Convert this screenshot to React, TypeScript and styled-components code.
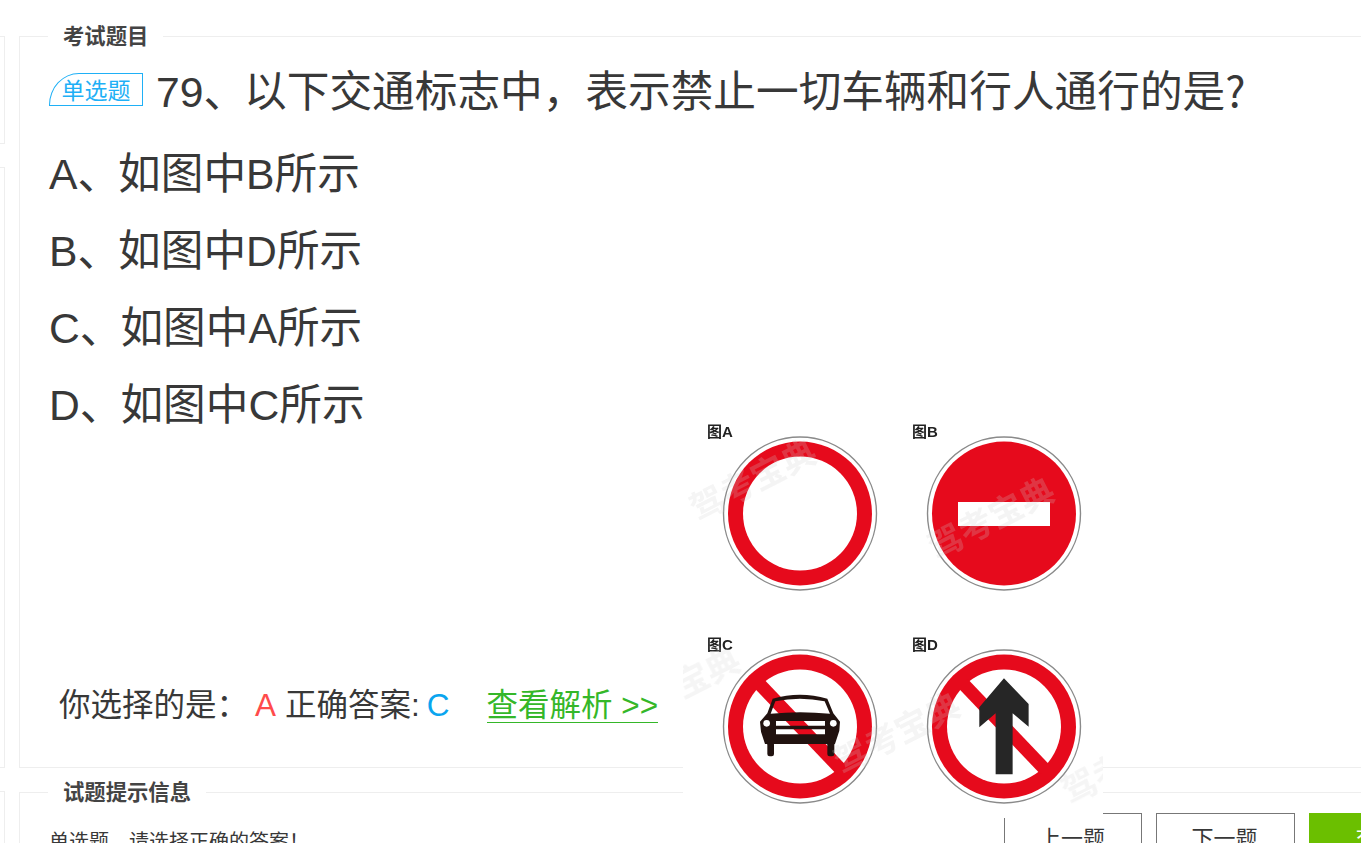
import React from 'react';
import styled, { createGlobalStyle } from 'styled-components';

const GlobalStyle = createGlobalStyle`
  html, body {
    margin: 0;
    height: 843px;
    overflow: hidden;
    background: #fff;
  }
  body {
    font-family: "Liberation Sans", "Noto Sans CJK SC", sans-serif;
    color: #383838;
  }
`;

const Page = styled.div`
  position: relative;
  display: flex;
  width: 1361px;
  height: 843px;
  overflow: hidden;
`;

const SideColumn = styled.div`
  flex: none;
  width: 5px;
  padding-top: 36px;
  display: flex;
  flex-direction: column;
  gap: 23px;
`;

const SideBox = styled.div<{ $height: number }>`
  flex: none;
  height: ${({ $height }) => $height}px;
  border: 1px solid #eee;
  border-left: 0;
`;

const MainColumn = styled.div`
  flex: none;
  width: 1400px;
  margin-left: 14px;
  padding-top: 23px;
`;

const Panel = styled.fieldset<{ $height: number }>`
  box-sizing: border-box;
  height: ${({ $height }) => $height}px;
  margin: 0 0 11px;
  padding: 0 29px;
  border: 1px solid #eee;
  min-width: 0;
`;

const PanelTitle = styled.legend`
  margin-left: -1px;
  padding: 2px 15px 0;
  font-size: 21.33px;
  line-height: 24px;
  font-weight: 700;
  color: #444;
`;

const QuestionRow = styled.div`
  display: flex;
  align-items: center;
  height: 56px;
  margin-top: 13px;
  font-size: 42.67px;
  line-height: 56px;
  white-space: nowrap;
`;

const TypeBadge = styled.span`
  box-sizing: border-box;
  flex: none;
  width: 94px;
  height: 33px;
  margin: -1px 13px 0 0;
  border: 1px solid #1fb0f6;
  border-top-left-radius: 30px 32px;
  color: #1fb0f6;
  font-size: 23px;
  line-height: 35px;
  text-align: center;
`;

const Pause = styled.span`
  margin-right: -2px;
`;

const QuestionMark = styled.span`
  font-family: "Noto Sans CJK SC", sans-serif;
`;

const OptionList = styled.div`
  margin-top: 18px;
`;

const Option = styled.div`
  height: 77px;
  font-size: 42.67px;
  line-height: 77px;
  white-space: nowrap;
`;

const ResultRow = styled.div`
  display: flex;
  align-items: baseline;
  margin-top: 241px;
  padding-left: 10px;
  font-size: 31.5px;
  line-height: 40px;
  white-space: nowrap;
`;

const Answer = styled.span<{ $color: string; $left: number; $right: number }>`
  color: ${({ $color }) => $color};
  margin: 0 ${({ $right }) => $right}px 0 ${({ $left }) => $left}px;
`;

const AnalysisLink = styled.a`
  color: #35b729;
  border-bottom: 1px solid #35b729;
  line-height: 34px;
  text-decoration: none;
`;

const HintText = styled.div`
  margin-top: 23px;
  font-size: 20px;
  line-height: 28px;
  white-space: nowrap;
`;

const ButtonBar = styled.div`
  position: absolute;
  left: 1004px;
  top: 813px;
  display: flex;
  gap: 14px;
`;

const NavButton = styled.button<{ $width: number; $primary?: boolean }>`
  box-sizing: border-box;
  flex: none;
  width: ${({ $width }) => $width}px;
  height: 60px;
  padding: 0 2px 8px 0;
  border: 1px solid ${({ $primary }) => ($primary ? '#6bbf00' : '#777')};
  background: ${({ $primary }) => ($primary ? '#6bbf00' : '#fff')};
  color: ${({ $primary }) => ($primary ? '#fff' : '#383838')};
  font: inherit;
  font-size: 22px;
  line-height: 28px;
`;

const SignSheet = styled.svg`
  position: absolute;
  left: 683px;
  top: 410px;
  width: 420px;
  height: 408px;
  background: #fff;
`;

const SoftImage = styled.g`
  filter: blur(0.4px);
`;

const SignLabel = styled.text`
  font-size: 15px;
  font-weight: 700;
  fill: #222;
`;

const Watermark = styled.text`
  font-size: 34px;
  font-weight: 700;
  fill: #cfcfcf;
  opacity: 0.22;
`;

const RED = '#e60a1c';

function Ring({ cx, cy, children }: { cx: number; cy: number; children?: React.ReactNode }) {
  return (
    <g>
      <circle cx={cx} cy={cy} r={76.5} fill="#fff" stroke="#8a8a8a" strokeWidth={1.4} />
      <circle cx={cx} cy={cy} r={72} fill={RED} />
      <circle cx={cx} cy={cy} r={57} fill="#fff" />
      {children}
    </g>
  );
}

function Slash({ cx, cy }: { cx: number; cy: number }) {
  return <line x1={cx - 41} y1={cy - 43} x2={cx + 41} y2={cy + 43} stroke={RED} strokeWidth={13} />;
}

export default function App() {
  return (
    <Page>
      <GlobalStyle />
      <SideColumn>
        <SideBox $height={106} />
        <SideBox $height={599} />
        <SideBox $height={100} />
      </SideColumn>
      <MainColumn>
        <Panel $height={745}>
          <PanelTitle>考试题目</PanelTitle>
          <QuestionRow>
            <TypeBadge>单选题</TypeBadge>
            <span>
              79<Pause>、</Pause>以下交通标志中，表示禁止一切车辆和行人通行的是<QuestionMark>?</QuestionMark>
            </span>
          </QuestionRow>
          <OptionList>
            <Option>A<Pause>、</Pause>如图中B所示</Option>
            <Option>B<Pause>、</Pause>如图中D所示</Option>
            <Option>C<Pause>、</Pause>如图中A所示</Option>
            <Option>D<Pause>、</Pause>如图中C所示</Option>
          </OptionList>
          <ResultRow>
            你选择的是：
            <Answer $color="#ff4b4b" $left={7} $right={9}>A</Answer>
            正确答案:
            <Answer $color="#0aa5ef" $left={7} $right={37}>C</Answer>
            <AnalysisLink href="#">查看解析 &gt;&gt;</AnalysisLink>
          </ResultRow>
        </Panel>
        <Panel $height={200}>
          <PanelTitle>试题提示信息</PanelTitle>
          <HintText>单选题，请选择正确的答案！</HintText>
        </Panel>
      </MainColumn>

      <ButtonBar>
        <NavButton $width={138}>上一题</NavButton>
        <NavButton $width={139}>下一题</NavButton>
        <NavButton $width={139} $primary>交卷</NavButton>
      </ButtonBar>

      <SignSheet viewBox="683 410 420 408">
        <SoftImage>
          <SignLabel x={707} y={437}>图A</SignLabel>
          <SignLabel x={912} y={437}>图B</SignLabel>
          <SignLabel x={707} y={650}>图C</SignLabel>
          <SignLabel x={912} y={650}>图D</SignLabel>

          <Ring cx={800} cy={513.5} />

          <circle cx={1004} cy={513.5} r={76.5} fill="#fff" stroke="#8a8a8a" strokeWidth={1.4} />
          <circle cx={1004} cy={513.5} r={72} fill={RED} />
          <rect x={958} y={502} width={92} height={24} fill="#fff" />

          <Ring cx={800} cy={726.5}>
            <Slash cx={800} cy={726.5} />
            <g transform="translate(750 680) scale(0.3333)" fill="#21120f">
              <path
                fillRule="evenodd"
                d="M30 125 L52 100 L68 56 Q150 32 232 56 L250 100 L270 125 L268 152 L255 192 L45 192 L33 155 Z
                   M62 101 L76 64 Q150 48 224 64 L240 101 Q150 92 62 101 Z
                   M78 123 L78 137 L225 137 L225 123 Z
                   M78 148 L78 163 L225 163 L225 148 Z"
              />
              <rect x={52} y={186} width={20} height={43} rx={7} />
              <rect x={232} y={186} width={21} height={43} rx={7} />
              <circle cx={50} cy={130} r={10} fill="#fff" />
              <circle cx={250} cy={130} r={10} fill="#fff" />
            </g>
          </Ring>

          <Ring cx={1004} cy={726.5}>
            <Slash cx={1004} cy={726.5} />
            <path
              transform="translate(680 620) scale(0.3333)"
              d="M972 175 L1046 252 L1046 320 L998 280 L998 463 L947 463 L947 280 L898 322 L898 262 Z"
              fill="#262626"
            />
          </Ring>

          <Watermark transform="translate(698 522) rotate(-27)">驾考宝典</Watermark>
          <Watermark transform="translate(936 560) rotate(-27)">驾考宝典</Watermark>
          <Watermark transform="translate(622 730) rotate(-27)">驾考宝典</Watermark>
          <Watermark transform="translate(842 775) rotate(-27)">驾考宝典</Watermark>
          <Watermark transform="translate(1070 805) rotate(-27)">驾考宝典</Watermark>
        </SoftImage>
      </SignSheet>
    </Page>
  );
}
